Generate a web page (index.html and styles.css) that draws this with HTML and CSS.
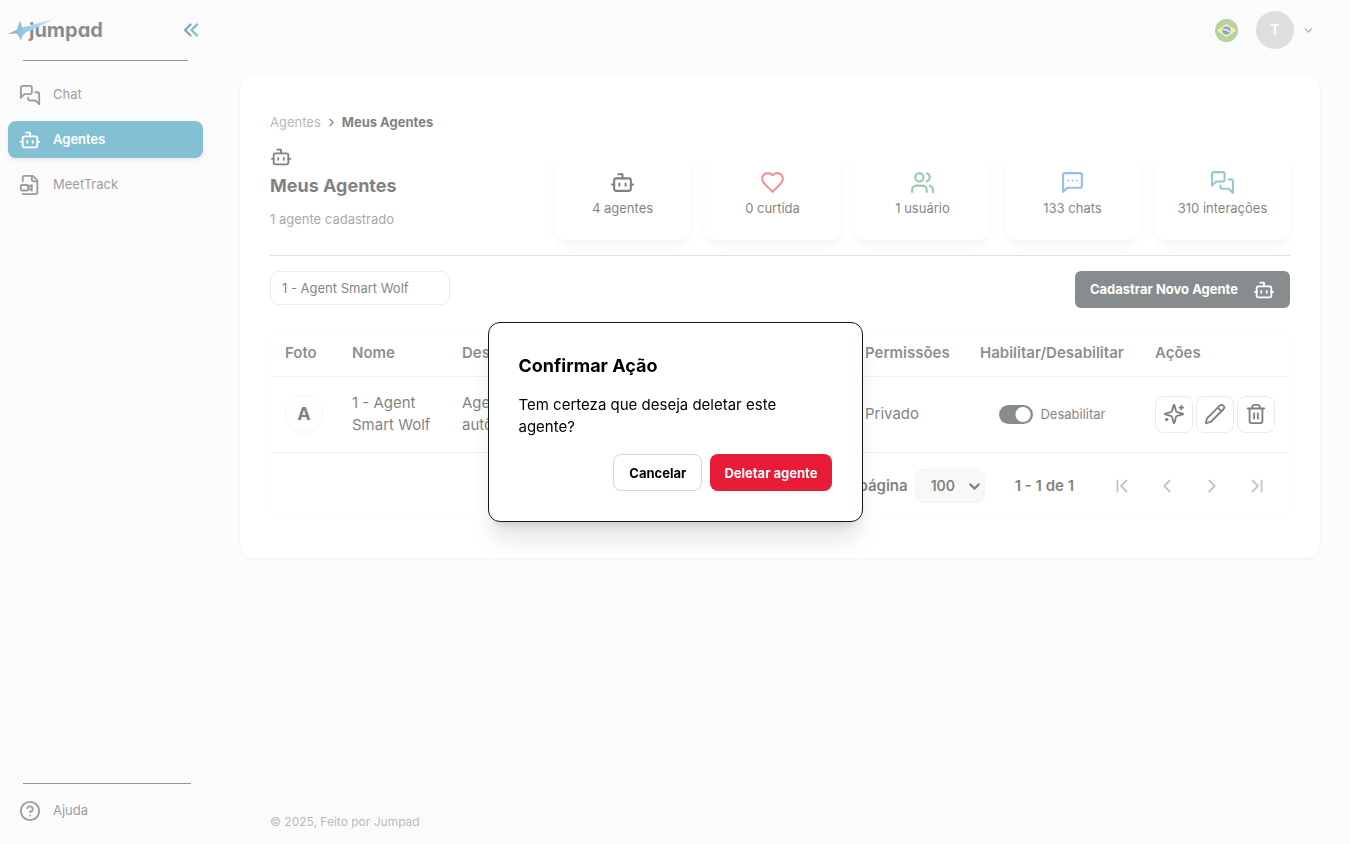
FILE: index.html
```html
<!DOCTYPE html>
<html lang="pt-BR">
<head>
<meta charset="utf-8">
<meta name="viewport" content="width=device-width, initial-scale=1">
<title>Meus Agentes - Jumpad</title>
<link rel="stylesheet" href="styles.css">
</head>
<body>
<svg class="sprite" aria-hidden="true">
  <symbol id="bot" viewBox="0 0 24 24"><path d="M12 8V4H8M2 14h2M20 14h2M15 13v2M9 13v2"/><rect x="4" y="8" width="16" height="12" rx="2"/></symbol>
  <symbol id="chats" viewBox="0 0 24 24"><path d="M14 9a2 2 0 0 1-2 2H6l-4 4V4a2 2 0 0 1 2-2h8a2 2 0 0 1 2 2z"/><path d="M18 9h2a2 2 0 0 1 2 2v11l-4-4h-6a2 2 0 0 1-2-2v-1"/></symbol>
  <symbol id="video" viewBox="0 0 24 24"><path d="M4 22h14a2 2 0 0 0 2-2V7l-5-5H6a2 2 0 0 0-2 2v4"/><path d="M14 2v4a2 2 0 0 0 2 2h4"/><rect x="2" y="12" width="8" height="6" rx="1"/><path d="m10 15.500 4 2.500v-6l-4 2.500"/></symbol>
  <symbol id="help" viewBox="0 0 24 24"><circle cx="12" cy="12" r="10"/><path d="M9.090 9a3 3 0 0 1 5.830 1c0 2-3 3-3 3M12 17h.01"/></symbol>
  <symbol id="heart" viewBox="0 0 24 24"><path d="M19 14c1.490-1.460 3-3.210 3-5.500A5.500 5.500 0 0 0 16.500 3c-1.760 0-3 .5-4.500 2-1.500-1.500-2.740-2-4.500-2A5.500 5.500 0 0 0 2 8.500c0 2.300 1.500 4.050 3 5.500l7 7Z"/></symbol>
  <symbol id="users" viewBox="0 0 24 24"><path d="M16 21v-2a4 4 0 0 0-4-4H6a4 4 0 0 0-4 4v2M22 21v-2a4 4 0 0 0-3-3.870M16 3.130a4 4 0 0 1 0 7.750"/><circle cx="9" cy="7" r="4"/></symbol>
  <symbol id="message" viewBox="0 0 24 24"><path d="M21 15a2 2 0 0 1-2 2H7l-4 4V5a2 2 0 0 1 2-2h14a2 2 0 0 1 2 2zM8 10h.01M12 10h.01M16 10h.01"/></symbol>
  <symbol id="sparkles" viewBox="0 0 24 24"><path d="M9.937 15.500A2 2 0 0 0 8.500 14.063l-6.135-1.582a.5.5 0 0 1 0-.962L8.500 9.936A2 2 0 0 0 9.937 8.500l1.582-6.135a.5.5 0 0 1 .963 0L14.063 8.500A2 2 0 0 0 15.500 9.937l6.135 1.581a.5.5 0 0 1 0 .964L15.500 14.063a2 2 0 0 0-1.437 1.437l-1.582 6.135a.5.5 0 0 1-.963 0zM20 3v4M22 5h-4M4 17v2M5 18H3"/></symbol>
  <symbol id="pencil" viewBox="0 0 24 24"><path d="M21.174 6.812a1 1 0 0 0-3.986-3.987L3.842 16.174a2 2 0 0 0-.5.83l-1.321 4.352a.5.5 0 0 0 .623.622l4.353-1.320a2 2 0 0 0 .83-.497zM15 5l4 4"/></symbol>
  <symbol id="trash" viewBox="0 0 24 24"><path d="M3 6h18M19 6v14a2 2 0 0 1-2 2H7a2 2 0 0 1-2-2V6M8 6V4a2 2 0 0 1 2-2h4a2 2 0 0 1 2 2v2M10 11v6M14 11v6"/></symbol>
  <symbol id="right" viewBox="0 0 24 24"><path d="m9 18 6-6-6-6"/></symbol>
  <symbol id="left" viewBox="0 0 24 24"><path d="m15 18-6-6 6-6"/></symbol>
  <symbol id="down" viewBox="0 0 24 24"><path d="m6 9 6 6 6-6"/></symbol>
  <symbol id="first" viewBox="0 0 24 24"><path d="m17 18-6-6 6-6M7 6v12"/></symbol>
  <symbol id="last" viewBox="0 0 24 24"><path d="m7 18 6-6-6-6M17 6v12"/></symbol>
</svg>

<div class="app">
  <aside class="sidebar">
    <div class="brand">
      <a class="logo" href="#" aria-label="jumpad">
        <span class="logo-text">jumpad</span>
        <svg class="logo-star" viewBox="0 0 48 24" aria-hidden="true">
          <defs><linearGradient id="star" x1="0" y1="0" x2="48" y2="0" gradientUnits="userSpaceOnUse"><stop offset="0" stop-color="#175878"/><stop offset=".42" stop-color="#26a4e2"/><stop offset=".7" stop-color="#60baf0"/><stop offset=".88" stop-color="#c6a0f4"/><stop offset="1" stop-color="#f2dcff"/></linearGradient></defs>
          <path fill="url(#star)" d="M0 15 9 10.500 12 1.500 14.500 8.500C26 6 36 2 46 0 38 4 29 9 18 13.500Q14.500 15 12.500 22 11 15.500 8 14.500Z"/>
        </svg>
      </a>
      <button class="collapse" type="button" aria-label="Recolher menu">
        <svg viewBox="0 0 16 16" aria-hidden="true"><path stroke="#114a68" d="M7.500 2.500 2 8l5.500 5.500"/><path stroke="#0c7499" d="M14 2.500 8.500 8l5.500 5.500"/></svg>
      </button>
    </div>
    <hr class="rule">
    <nav class="nav">
      <a class="nav-item" href="#"><svg class="icon"><use href="#chats"/></svg>Chat</a>
      <a class="nav-item active" href="#" aria-current="page"><svg class="icon"><use href="#bot"/></svg>Agentes</a>
      <a class="nav-item" href="#"><svg class="icon"><use href="#video"/></svg>MeetTrack</a>
    </nav>
    <hr class="rule rule-bottom">
    <a class="nav-item" href="#"><svg class="icon"><use href="#help"/></svg>Ajuda</a>
  </aside>

  <div class="main">
    <header class="topbar">
      <button class="flag" type="button" aria-label="Português (Brasil)">
        <svg viewBox="0 0 24 24" aria-hidden="true"><circle cx="12" cy="12" r="12" fill="#6da544"/><path fill="#ffda44" d="m12 5 10 7-10 7-10-7z"/><circle cx="12" cy="12" r="4.300" fill="#0052b4"/><path d="M8.200 10.800q4.200-.6 7.400 3" fill="none" stroke="#f0f0f0" stroke-width="1.300"/></svg>
      </button>
      <button class="account" type="button" aria-label="Conta">
        <span class="avatar">T</span>
        <svg class="icon caret"><use href="#down"/></svg>
      </button>
    </header>

    <main class="card">
      <nav class="crumbs" aria-label="Trilha">
        <a href="#">Agentes</a>
        <svg class="icon crumb-sep"><use href="#right"/></svg>
        <strong>Meus Agentes</strong>
      </nav>
      <section class="summary">
        <div class="heading">
          <svg class="icon"><use href="#bot"/></svg>
          <h1>Meus Agentes</h1>
          <p>1 agente cadastrado</p>
        </div>
        <ul class="stats">
          <li class="stat"><svg class="icon"><use href="#bot"/></svg>4 agentes</li>
          <li class="stat"><svg class="icon red"><use href="#heart"/></svg>0 curtida</li>
          <li class="stat"><svg class="icon green"><use href="#users"/></svg>1 usuário</li>
          <li class="stat"><svg class="icon blue"><use href="#message"/></svg>133 chats</li>
          <li class="stat"><svg class="icon teal"><use href="#chats"/></svg>310 interações</li>
        </ul>
      </section>
      <div class="toolbar">
        <input class="search" type="text" aria-label="Buscar agente" value="1 - Agent Smart Wolf">
        <button class="create" type="button">Cadastrar Novo Agente<svg class="icon"><use href="#bot"/></svg></button>
      </div>
      <div class="table-box">
        <table class="agents">
          <colgroup><col class="c-photo"><col class="c-name"><col><col class="c-perm"><col class="c-toggle"><col class="c-actions"></colgroup>
          <thead><tr><th>Foto</th><th>Nome</th><th>Descrição</th><th>Permissões</th><th>Habilitar/Desabilitar</th><th>Ações</th></tr></thead>
          <tbody><tr>
            <td><span class="photo">A</span></td>
            <td>1 - Agent Smart Wolf</td>
            <td>Agente<br>autônomo</td>
            <td>Privado</td>
            <td><label class="toggle"><input type="checkbox" role="switch" checked>Desabilitar</label></td>
            <td><div class="actions">
              <button type="button" aria-label="Melhorar"><svg class="icon"><use href="#sparkles"/></svg></button>
              <button type="button" aria-label="Editar"><svg class="icon"><use href="#pencil"/></svg></button>
              <button type="button" aria-label="Deletar"><svg class="icon"><use href="#trash"/></svg></button>
            </div></td>
          </tr></tbody>
        </table>
        <div class="pager">
          <label for="size">Itens por página</label>
          <span class="select-wrap"><select id="size"><option>100</option></select><svg class="icon"><use href="#down"/></svg></span>
          <span class="range">1 - 1 de 1</span>
          <div class="pages">
            <button type="button" aria-label="Primeira página"><svg class="icon"><use href="#first"/></svg></button>
            <button type="button" aria-label="Página anterior"><svg class="icon"><use href="#left"/></svg></button>
            <button type="button" aria-label="Próxima página"><svg class="icon"><use href="#right"/></svg></button>
            <button type="button" aria-label="Última página"><svg class="icon"><use href="#last"/></svg></button>
          </div>
        </div>
      </div>
    </main>
    <footer class="footer">© 2025, Feito por Jumpad</footer>
  </div>
</div>

<div class="backdrop">
  <div class="modal" role="dialog" aria-modal="true" aria-labelledby="modal-title">
    <h2 id="modal-title">Confirmar Ação</h2>
    <p>Tem certeza que deseja deletar este agente?</p>
    <div class="modal-actions">
      <button class="cancel" type="button">Cancelar</button>
      <button class="delete" type="button">Deletar agente</button>
    </div>
  </div>
</div>
</body>
</html>
```

FILE: styles.css
```css
* { box-sizing: border-box; }
body { margin: 0; background: #f7f7f7; color: #000; font: 15px/22px Inter, sans-serif; }
h1, h2, p, ul { margin: 0; padding: 0; }
button, input, select { font: inherit; color: inherit; }
button { padding: 0; border: 0; background: none; cursor: pointer; }
a { color: inherit; text-decoration: none; }
.sprite { display: none; }
.icon { flex: none; width: 22px; height: 22px; fill: none; stroke: currentColor; stroke-width: 2; stroke-linecap: round; stroke-linejoin: round; }

.app { display: flex; min-height: 100vh; }
.sidebar { display: flex; flex: none; flex-direction: column; width: 211px; padding: 15px 8px; }
.brand { display: flex; align-items: center; justify-content: space-between; height: 30px; padding-right: 4px; }
.logo { position: relative; padding-left: 21px; }
.logo-text { color: #0f1a1e; font-size: 20px; font-weight: 700; line-height: 30px; font-feature-settings: "cv11"; }
.logo-star { position: absolute; top: 4px; left: 0; width: 48px; height: 24px; }
.collapse { display: flex; }
.collapse svg { width: 16px; height: 16px; fill: none; stroke-width: 2.4; stroke-linecap: round; stroke-linejoin: round; }
.rule { width: 165px; height: 1px; margin: 15px 15px 0; border: 0; background: #273034; }
.rule-bottom { width: 168px; margin: auto 15px 8px; }
.nav { display: flex; flex-direction: column; gap: 8px; padding-top: 15px; }
.nav-item { display: flex; align-items: center; gap: 12px; width: 195px; height: 37px; padding: 0 11px; border-radius: 8px; color: #35393b; font-size: 13px; line-height: 21px; }
.nav-item.active { background: #0881a6; color: #fff; font-weight: 600; box-shadow: 0 2px 4px rgba(0, 0, 0, .15); }

.main { display: flex; flex: 1; flex-direction: column; min-width: 0; padding: 11px 29px 11px 28px; }
.topbar { display: flex; align-items: center; justify-content: flex-end; gap: 18px; height: 38px; padding-right: 6px; }
.flag svg { display: block; width: 23px; height: 23px; }
.account { display: flex; align-items: center; gap: 8px; color: #4b5563; }
.avatar { width: 38px; border-radius: 50%; background: #bdbdbd; color: #fff; font-weight: 500; line-height: 38px; }
.caret { width: 13px; height: 13px; }
.card { margin-top: 25px; padding: 36px 30px 38px; border: 1px solid #ededed; border-radius: 15px; background: #fff; box-shadow: 0 1px 2px rgba(0, 0, 0, .05); }
.crumbs { display: flex; align-items: center; gap: 4px; font-size: 13px; }
.crumbs a { color: #6d7178; }
.crumbs strong { font-weight: 700; }
.crumb-sep { width: 13px; height: 13px; }
.summary { display: flex; align-items: flex-start; justify-content: space-between; margin-top: 13px; padding-bottom: 15px; border-bottom: 1px solid #c2c2c6; }
.heading .icon { display: block; }
.heading h1 { padding: 4px 0 2px; font-size: 18px; font-weight: 700; line-height: 28px; }
.heading p { padding-top: 6px; color: #4b5158; font-size: 13px; }
.stats { display: flex; gap: 15px; list-style: none; }
.stat { display: flex; flex-direction: column; align-items: center; gap: 2px; width: 135px; height: 94px; padding-top: 24px; border-radius: 12px; background: #fff; box-shadow: 0 8px 14px -4px rgba(0, 0, 0, .12); font-size: 13px; }
.stat .icon { width: 25px; height: 25px; }
.red { color: #dc2626; }
.green { color: #35974b; }
.blue { color: #247bdf; }
.teal { color: #28919c; }
.toolbar { display: flex; align-items: flex-start; justify-content: space-between; padding: 15px 0 23px; }
.search { width: 180px; height: 34px; padding: 0 11px; border: 1px solid #d6d8dc; border-radius: 8px; background: #fff; font-size: 13px; outline: 0; }
.create { display: flex; align-items: center; gap: 15px; height: 37px; padding: 0 15px; border-radius: 6px; background: #0f191c; color: #fff; font-size: 13px; font-weight: 700; line-height: 21px; }
.table-box { border-radius: 8px; box-shadow: inset 0 0 0 1px #fafafa; }
.agents { width: 100%; border-collapse: collapse; table-layout: fixed; text-align: left; }
.agents th, .agents td { padding: 0 15px; border-bottom: 1px solid #e3e5e9; }
.agents th { height: 45px; color: #111a1d; font-weight: 600; white-space: nowrap; }
.agents td { height: 76px; }
.c-photo { width: 67px; }
.c-name { width: 110px; }
.c-perm { width: 115px; }
.c-toggle { width: 175px; }
.c-actions { width: 150px; }
.photo { display: block; width: 38px; height: 38px; border: 1px solid #e6e8ea; border-radius: 50%; font-size: 18px; font-weight: 700; line-height: 35px; text-align: center; }
.toggle { display: flex; align-items: center; justify-content: center; gap: 7px; font-size: 13px; }
.toggle input { flex: none; width: 34px; height: 19px; margin: 0; border-radius: 10px; appearance: none; background: radial-gradient(circle at 24px 50%, #fff 7px, #0f191c 8px); }
.actions { display: flex; gap: 3px; }
.actions button { display: flex; align-items: center; justify-content: center; width: 38px; height: 37px; border: 1px solid #d5d6dc; border-radius: 8px; }
.pager { display: flex; align-items: center; justify-content: flex-end; height: 67px; padding-right: 15px; font-weight: 600; }
.select-wrap { display: flex; position: relative; margin-left: 7px; }
.select-wrap select { width: 70px; height: 34px; padding: 0 15px; border: 1px solid #e6e8ec; border-radius: 8px; appearance: none; background: #f0f0ee; font-size: 14px; }
.select-wrap .icon { position: absolute; top: 9px; right: 2px; width: 17px; height: 17px; stroke-width: 3; pointer-events: none; }
.range { margin: 0 29px 0 30px; }
.pages { display: flex; gap: 8px; color: #8b8b8b; }
.pages button { display: flex; align-items: center; justify-content: center; width: 37px; height: 37px; }
.footer { margin-top: auto; padding-left: 31px; color: #6b7280; font-size: 12px; }

.backdrop { position: fixed; inset: 0; display: flex; align-items: center; justify-content: center; background: rgba(255, 255, 255, .5); }
.modal { width: 375px; max-width: 90%; padding: 29px 30px 30px; border: 1px solid #0f191c; border-radius: 12px; background: #fff; box-shadow: 0 20px 25px -5px rgba(0, 0, 0, .12), 0 8px 10px -6px rgba(0, 0, 0, .12); }
.modal h2 { font-size: 18px; font-weight: 700; line-height: 28px; }
.modal p { padding: 14px 0 16px; }
.modal-actions { display: flex; justify-content: flex-end; gap: 8px; }
.modal-actions button { height: 37px; border-radius: 8px; font-size: 13px; font-weight: 700; }
.modal-actions .cancel { padding: 0 15px; border: 1px solid #d1d5de; }
.modal-actions .delete { padding: 0 14px; background: #e81c36; color: #fff; }
```
